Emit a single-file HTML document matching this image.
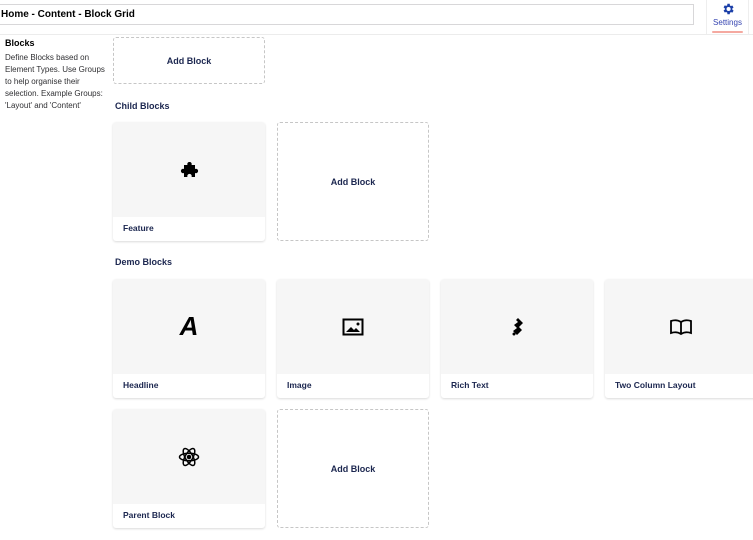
<!DOCTYPE html>
<html><head><style>
*{box-sizing:border-box;margin:0;padding:0}
body{width:753px;height:540px;overflow:hidden;background:#fff;font-family:"Liberation Sans",sans-serif;color:#1b264f;position:relative}
.abs{position:absolute}
.crumb{left:-2px;top:4px;width:696px;height:21px;border:1px solid #d8d7d9;font-size:10px;font-weight:bold;color:#000;padding:4px 2px}
.hdr{left:0;top:34px;width:753px;height:1px;background:#ececec}
.tab{left:706px;top:0;width:43px;height:34px;border-left:1px solid #eee;border-right:1px solid #eee;text-align:center;font-size:8px;color:#3544b1}
.tab .bar{position:absolute;left:5px;bottom:1px;width:31px;height:2px;background:#f5a9a0;border-radius:1px}
.side h4{font-size:9px;color:#000;margin-bottom:4px}
.side p{font-size:8px;line-height:12px;color:#303033}
.card{width:152px;border-radius:3px;background:#fff;box-shadow:0 1px 2px rgba(0,0,0,.15);overflow:hidden}
.card .img{height:95px;background:#f6f6f6;display:flex;align-items:center;justify-content:center}
.card .lbl{height:24px;font-size:8.5px;font-weight:bold;padding:6px 10px}
.add{width:152px;border:1px dashed #c6c6c6;border-radius:3px;display:flex;align-items:center;justify-content:center;font-size:9px;font-weight:bold}
.gh{font-size:9px;font-weight:bold;color:#1b264f}
</style></head><body>
<div class="abs crumb">Home - Content - Block Grid</div>
<div class="abs tab"><svg style="margin-top:2px" width="14" height="14" viewBox="0 0 24 24"><path fill="#1b3fa8" d="M19.4 13a7.5 7.5 0 0 0 0-2l2.1-1.6-2-3.5-2.5 1a7 7 0 0 0-1.7-1L15 3h-4l-.4 2.7a7 7 0 0 0-1.7 1l-2.5-1-2 3.5L6.6 11a7.5 7.5 0 0 0 0 2l-2.2 1.6 2 3.5 2.5-1a7 7 0 0 0 1.7 1L11 21h4l.4-2.7a7 7 0 0 0 1.7-1l2.5 1 2-3.5zM13 15.5a3.5 3.5 0 1 1 0-7 3.5 3.5 0 0 1 0 7z"/></svg><div>Settings</div><div class="bar"></div></div>
<div class="abs hdr"></div>
<div class="abs side" style="left:5px;top:38px;width:100px"><h4>Blocks</h4><p>Define Blocks based on Element Types. Use Groups to help organise their selection. Example Groups: 'Layout' and 'Content'</p></div>
<div class="abs add" style="left:113px;top:37px;height:47px">Add Block</div>
<div class="abs gh" style="left:115px;top:101px">Child Blocks</div>
<div class="abs card" style="left:113px;top:122px"><div class="img"><svg width="22" height="16" viewBox="0 0 22 16"><path d="M6 3h3.5a2.2 2.2 0 1 1 4 0H17v4a2.2 2.2 0 1 1 0 4v4h-3.5a2.2 2.2 0 1 0-4 0H6v-4a2.2 2.2 0 1 1 0-4z"/></svg></div><div class="lbl">Feature</div></div>
<div class="abs add" style="left:277px;top:122px;height:119px">Add Block</div>
<div class="abs gh" style="left:115px;top:257px">Demo Blocks</div>
<div class="abs card" style="left:113px;top:279px"><div class="img"><span style="font-size:26px;font-weight:bold;font-style:italic;color:#000">A</span></div><div class="lbl">Headline</div></div>
<div class="abs card" style="left:277px;top:279px"><div class="img"><svg width="22" height="18" viewBox="0 0 22 18"><rect x="1.5" y="1.5" width="19" height="15" fill="none" stroke="#000" stroke-width="2"/><path d="M4 14l5-5 3 3 2-2 4 4z"/><circle cx="16" cy="6" r="1.5"/></svg></div><div class="lbl">Image</div></div>
<div class="abs card" style="left:441px;top:279px"><div class="img"><svg width="16" height="20" viewBox="0 0 16 20"><path d="M9 1l5 5-4 4 3 3-5 5-1-1-3-3 4-3-3-3 4-3-2-2z"/><circle cx="5" cy="17" r="1.5"/></svg></div><div class="lbl">Rich Text</div></div>
<div class="abs card" style="left:605px;top:279px"><div class="img"><svg width="24" height="18" viewBox="0 0 24 18"><path d="M12 4C9 2 5 2 2 3v12c3-1 7-1 10 1 3-2 7-2 10-1V3c-3-1-7-1-10 1zm0 0v12" fill="none" stroke="#000" stroke-width="1.8"/></svg></div><div class="lbl">Two Column Layout</div></div>
<div class="abs card" style="left:113px;top:409px"><div class="img"><svg width="22" height="22" viewBox="0 0 22 22" fill="none" stroke="#000" stroke-width="1.5"><ellipse cx="11" cy="11" rx="9.5" ry="3.8"/><ellipse cx="11" cy="11" rx="9.5" ry="3.8" transform="rotate(60 11 11)"/><ellipse cx="11" cy="11" rx="9.5" ry="3.8" transform="rotate(-60 11 11)"/><circle cx="11" cy="11" r="1.5" fill="#000"/></svg></div><div class="lbl">Parent Block</div></div>
<div class="abs add" style="left:277px;top:409px;height:119px">Add Block</div>
</body></html>
